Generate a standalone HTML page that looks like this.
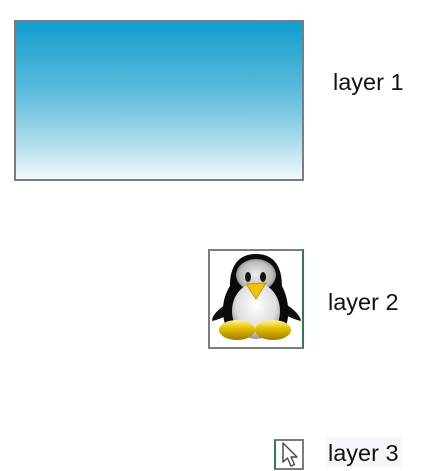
<!DOCTYPE html>
<html><head><style>
html,body{margin:0;padding:0;background:#fff;width:429px;height:471px;overflow:hidden;position:relative;font-family:"Liberation Sans",Arial,sans-serif}
.b{position:absolute;box-sizing:border-box}
.t{position:absolute;font-size:23.5px;color:#111;line-height:26px}
</style></head><body>
<div class="b" style="left:14px;top:20px;width:290px;height:161px;border:2px solid #7b7d80;background:linear-gradient(#129dce,#5ebcdc 45%,#a9dbeb 75%,#f4f9fb)"></div>
<div class="t" style="left:333px;top:69px">layer 1</div>

<div class="b" style="left:208px;top:249px;width:96px;height:100px;border:2px solid #7b7d80;border-right-color:#2e7d4f;background:#fff">
<svg width="92" height="96" viewBox="0 0 92 96">
<defs>
<radialGradient id="wh" cx="0.5" cy="0.4" r="0.6"><stop offset="0" stop-color="#fff"/><stop offset="0.7" stop-color="#ddd"/><stop offset="1" stop-color="#999"/></radialGradient>
<radialGradient id="hd" cx="0.5" cy="0.5" r="0.6"><stop offset="0" stop-color="#eee"/><stop offset="0.7" stop-color="#bbb"/><stop offset="1" stop-color="#555"/></radialGradient>
<linearGradient id="ft" x1="0" y1="0" x2="0" y2="1"><stop offset="0" stop-color="#fff6a0"/><stop offset="0.4" stop-color="#e6c200"/><stop offset="1" stop-color="#a07a00"/></linearGradient>
</defs>
<path d="M18 52 Q2 62 2 70 Q12 68 20 62Z" fill="#111"/>
<path d="M74 52 Q90 62 91 70 Q82 68 72 62Z" fill="#111"/>
<path d="M46 3 C22 3 20 25 20 35 C10 50 10 75 24 86 L68 86 C82 75 80 50 72 35 C72 25 70 3 46 3Z" fill="#0a0a0a"/>
<ellipse cx="46" cy="24" rx="20" ry="16" fill="url(#hd)"/>
<ellipse cx="46" cy="60" rx="24" ry="28" fill="url(#wh)"/>
<ellipse cx="38" cy="26" rx="3" ry="5" fill="#111"/>
<ellipse cx="53" cy="26" rx="3" ry="5" fill="#111"/>
<path d="M36 33 L56 32 L46 48 Z" fill="#f2c200" stroke="#b88a00" stroke-width="0.8"/>
<ellipse cx="27" cy="79" rx="18" ry="10" fill="url(#ft)"/>
<ellipse cx="63" cy="79" rx="18" ry="10" fill="url(#ft)"/>
</svg>
</div>
<div class="t" style="left:328px;top:289px">layer 2</div>

<div class="b" style="left:274px;top:439px;width:30px;height:31px;border:2px solid #7b7d80;border-left-color:#2e7d4f">
<svg width="26" height="27" viewBox="0 0 26 27"><path d="M7 2 L7 21 L11.5 17 L15 25 L18.5 23.5 L15 16 L21 16 Z" fill="#fff" stroke="#444" stroke-width="1.4" stroke-linejoin="round"/></svg>
</div>
<div class="b" style="left:326px;top:437px;width:76px;height:30px;background:#f5f7fa"></div>
<div class="t" style="left:328px;top:440px">layer 3</div>
</body></html>
